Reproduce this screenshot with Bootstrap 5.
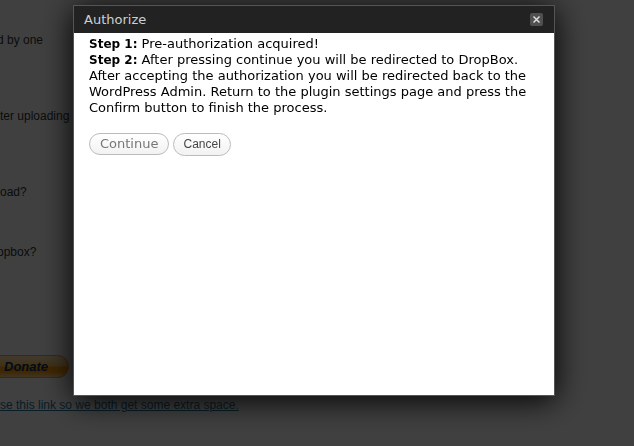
<!DOCTYPE html>
<html lang="en">
<head>
<meta charset="utf-8">
<meta name="viewport" content="width=device-width, initial-scale=1">
<title>Authorize</title>
<link rel="stylesheet" href="https://cdn.jsdelivr.net/npm/bootstrap@5.3.0/dist/css/bootstrap.min.css">
<style>
body { font-family: "Liberation Sans", Arial, sans-serif; font-size: 12px; line-height: 16px; color: #333; background: #fff; }
.settings { white-space: nowrap; padding-top: 32px; }
.question { margin-bottom: 60px; }
.question-short { margin-bottom: 44px; }
.cut-off { text-indent: -3px; }
.donate { width: 69px; height: 23px; margin: 95px 0 19px; padding: 0 0 0 4px; border: 1px solid #ff9933; border-left: 0; border-radius: 0 12px 12px 0; background: linear-gradient(#ffe5b4, #ffc663 45%, #ff9c0c 55%, #ff9c0c 75%, #ffd08a); color: #003366; font-size: 13px; font-weight: bold; font-style: italic; line-height: 20px; text-align: left; }
.share-link { color: #21759b; }
.shade { background: rgba(0, 0, 0, .75); }
.frame { padding: 5px 6px 0 0; }
.dialog-box { max-width: 482px; min-height: 391px; border: 1px solid #555; box-shadow: 0 4px 30px #000; font-family: "DejaVu Sans", Verdana, sans-serif; font-size: 13px; color: #000; }
.title-bar { background: #222; height: 27px; padding: 0 11px 0 10px; }
.title-bar h1 { font-size: 13px; line-height: 27px; font-weight: normal; color: #cfcfcf; }
.close-btn { width: 13px; height: 13px; background: #505050; border-radius: 2px; }
.close-btn svg { display: block; }
.dialog-text { padding: 3px 15px; }
.dialog-text b { font-size: 12px; }
.steps { margin-bottom: 17px; }
.pill { height: 23px; padding: 0 9px; border: 1px solid #bbb; border-radius: 12px; background: linear-gradient(#fff, #f2f2f2); font-size: 12px; line-height: 21px; color: #464646; font-family: "Liberation Sans", Arial, sans-serif; }
.pill-main { height: 22px; padding: 0 10px; font-family: "DejaVu Sans", Verdana, sans-serif; font-size: 13px; line-height: 20px; color: #777; }
</style>
<script src="https://cdn.jsdelivr.net/npm/bootstrap@5.3.0/dist/js/bootstrap.bundle.min.js"></script>
</head>
<body class="vh-100 overflow-hidden">
<main class="settings">
  <p class="question cut-off">d by one</p>
  <p class="question">ter uploading</p>
  <p class="question-short">oad?</p>
  <p class="mb-0 cut-off">opbox?</p>
  <button type="button" class="donate d-block">Donate</button>
  <a href="#" class="share-link">se this link so we both get some extra space.</a>
</main>
<div class="shade position-fixed top-0 start-0 w-100 h-100"></div>
<div class="frame position-fixed top-0 start-0 w-100 d-flex justify-content-center" role="dialog" aria-modal="true" aria-labelledby="dialogTitle">
  <section class="dialog-box w-100 bg-white">
    <header class="title-bar d-flex align-items-center justify-content-between">
      <h1 class="m-0" id="dialogTitle">Authorize</h1>
      <button type="button" class="close-btn border-0 p-0" aria-label="Close">
        <svg width="13" height="13" viewBox="0 0 13 13" fill="none" stroke="#ddd" stroke-width="1.5"><path d="M3.5 3.5l6 6M9.5 3.5l-6 6"/></svg>
      </button>
    </header>
    <div class="dialog-text">
      <p class="mb-0"><b>Step 1:</b> Pre-authorization acquired!</p>
      <p class="steps"><b>Step 2:</b> After pressing continue you will be redirected to DropBox. After accepting the authorization you will be redirected back to the WordPress Admin. Return to the plugin settings page and press the Confirm button to finish the process.</p>
      <div class="d-flex">
        <button type="button" class="pill pill-main">Continue</button>
        <button type="button" class="pill ms-1">Cancel</button>
      </div>
    </div>
  </section>
</div>
</body>
</html>
